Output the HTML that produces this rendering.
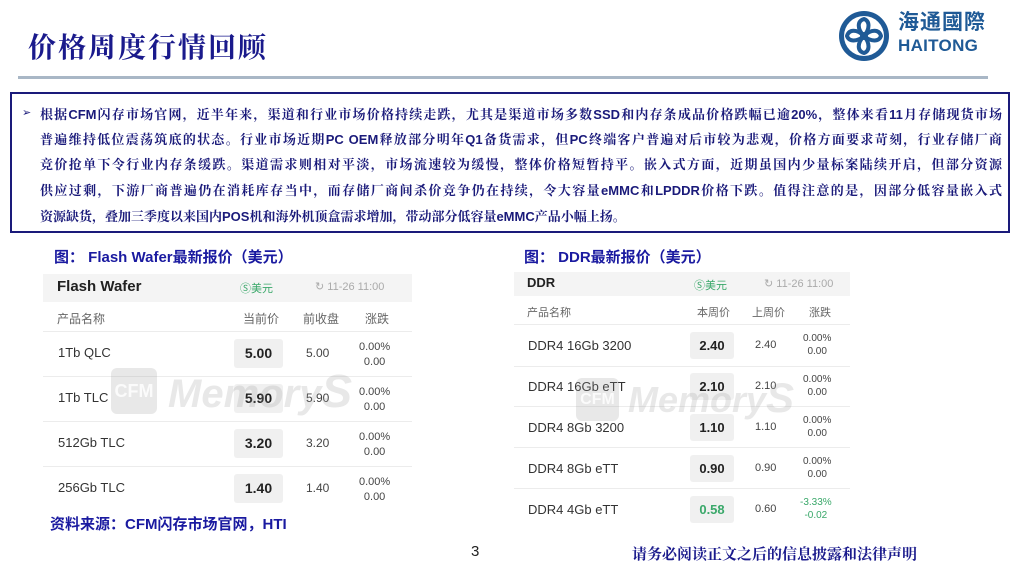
<!DOCTYPE html>
<html><head><meta charset="utf-8"><style>
*{margin:0;padding:0;box-sizing:border-box}
body{width:1024px;height:576px;background:#fff;position:relative;overflow:hidden;font-family:"Liberation Sans","Noto Sans CJK SC",sans-serif}
.abs{position:absolute;white-space:nowrap}
.title{left:28px;top:26px;font-size:28px;color:#1a1a8c;font-family:"Liberation Serif","Noto Serif CJK SC",serif;font-weight:bold;letter-spacing:2px}
.hr{left:18px;top:76px;width:970px;height:3px;background:#a9b7c6}
.box{left:10px;top:92px;width:1000px;height:141px;border:2px solid #1a1a7a}
.ln{position:absolute;left:40px;width:962px;font-size:13px;color:#1a1a7a;font-weight:bold;text-align:justify;text-align-last:justify;white-space:nowrap;font-family:"Liberation Sans","Noto Serif CJK SC",serif}
.cap{font-size:15px;font-weight:bold;color:#1a1aa0}
.hdr{background:#f4f4f4}
.g{color:#666;font-size:12px}
.pb{background:#f0f0f0;border-radius:3px;font-weight:bold;text-align:center;color:#222}
.sep{height:1px;background:#ececec}
.wm{font-size:40px;font-weight:bold;font-style:italic;color:rgba(150,150,150,0.22)}
.cfm{background:rgba(150,150,150,0.22);color:rgba(255,255,255,0.8);border-radius:6px;font-weight:bold;text-align:center}
</style></head><body>
<div class="abs title">价格周度行情回顾</div>
<svg class="abs" style="left:837px;top:9px" width="54" height="54" viewBox="0 0 54 54">
<circle cx="27" cy="27" r="25" fill="#1f5a96"/>
<circle cx="27" cy="27" r="20" fill="#fff"/>
<g fill="none" stroke="#1f5a96" stroke-width="4" stroke-linecap="round">
<path d="M27 27 C20 20 20 12 27 10 C33 12 33 20 27 27"/>
<path d="M27 27 C20 34 20 42 27 44 C33 42 33 34 27 27"/>
<path d="M27 27 C20 20 12 20 10 27 C12 33 20 33 27 27"/>
<path d="M27 27 C34 20 42 20 44 27 C42 33 34 33 27 27"/>
</g>
<circle cx="27" cy="27" r="4" fill="#1f5a96"/>
</svg>
<div class="abs" style="left:898px;top:11px;font-size:21px;line-height:24px;color:#1f5a96;font-weight:bold;letter-spacing:1px">海通國際</div>
<div class="abs" style="left:898px;top:36px;font-size:17px;line-height:20px;color:#1f5a96;font-weight:bold;letter-spacing:0.3px">HAITONG</div>
<div class="abs hr"></div>
<div class="abs box"></div>
<div class="abs" style="left:22px;top:106px;font-size:11px;color:#1a1a7a">➢</div>
<div class="ln" style="top:104px">根据CFM闪存市场官网，近半年来，渠道和行业市场价格持续走跌，尤其是渠道市场多数SSD和内存条成品价格跌幅已逾20%，整体来看11月存储现货市场</div>
<div class="ln" style="top:129px">普遍维持低位震荡筑底的状态。行业市场近期PC OEM释放部分明年Q1备货需求，但PC终端客户普遍对后市较为悲观，价格方面要求苛刻，行业存储厂商</div>
<div class="ln" style="top:154px">竞价抢单下令行业内存条缓跌。渠道需求则相对平淡，市场流速较为缓慢，整体价格短暂持平。嵌入式方面，近期虽国内少量标案陆续开启，但部分资源</div>
<div class="ln" style="top:180px">供应过剩，下游厂商普遍仍在消耗库存当中，而存储厂商间杀价竞争仍在持续，令大容量eMMC和LPDDR价格下跌。值得注意的是，因部分低容量嵌入式</div>
<div class="ln" style="top:206px;width:auto;text-align-last:left">资源缺货，叠加三季度以来国内POS机和海外机顶盒需求增加，带动部分低容量eMMC产品小幅上扬。</div>

<div class="abs cap" style="left:54px;top:246px">图： Flash Wafer最新报价（美元）</div>
<div class="abs hdr" style="left:43px;top:274px;width:369px;height:28px"></div>
<div class="abs" style="left:57px;top:278px;font-size:15px;font-weight:bold;color:#222">Flash Wafer</div>
<div class="abs" style="left:240px;top:280px;font-size:11px;color:#3aa86a">Ⓢ美元</div>
<div class="abs" style="left:315px;top:280px;font-size:11px;color:#aaa">↻ 11-26 11:00</div>
<div class="abs g" style="left:57px;top:310px">产品名称</div>
<div class="abs g" style="left:243px;top:310px">当前价</div>
<div class="abs g" style="left:303px;top:310px">前收盘</div>
<div class="abs g" style="left:365px;top:310px">涨跌</div>
<div class="abs sep" style="left:43px;top:331px;width:369px"></div>
<div class="abs sep" style="left:43px;top:376px;width:369px"></div>
<div class="abs sep" style="left:43px;top:421px;width:369px"></div>
<div class="abs sep" style="left:43px;top:466px;width:369px"></div>
<div class="abs" style="left:58px;top:345px;font-size:13px;color:#333">1Tb QLC</div>
<div class="abs pb" style="left:234px;top:339px;width:49px;height:29px;line-height:29px;font-size:14px">5.00</div>
<div class="abs" style="left:306px;top:346px;font-size:12px;color:#444">5.00</div>
<div class="abs" style="left:359px;top:340px;font-size:11px;color:#444;text-align:center;line-height:15px">0.00%<br>0.00</div>
<div class="abs" style="left:58px;top:390px;font-size:13px;color:#333">1Tb TLC</div>
<div class="abs pb" style="left:234px;top:384px;width:49px;height:29px;line-height:29px;font-size:14px">5.90</div>
<div class="abs" style="left:306px;top:391px;font-size:12px;color:#444">5.90</div>
<div class="abs" style="left:359px;top:385px;font-size:11px;color:#444;text-align:center;line-height:15px">0.00%<br>0.00</div>
<div class="abs" style="left:58px;top:435px;font-size:13px;color:#333">512Gb TLC</div>
<div class="abs pb" style="left:234px;top:429px;width:49px;height:29px;line-height:29px;font-size:14px">3.20</div>
<div class="abs" style="left:306px;top:436px;font-size:12px;color:#444">3.20</div>
<div class="abs" style="left:359px;top:430px;font-size:11px;color:#444;text-align:center;line-height:15px">0.00%<br>0.00</div>
<div class="abs" style="left:58px;top:480px;font-size:13px;color:#333">256Gb TLC</div>
<div class="abs pb" style="left:234px;top:474px;width:49px;height:29px;line-height:29px;font-size:14px">1.40</div>
<div class="abs" style="left:306px;top:481px;font-size:12px;color:#444">1.40</div>
<div class="abs" style="left:359px;top:475px;font-size:11px;color:#444;text-align:center;line-height:15px">0.00%<br>0.00</div>
<div class="abs cfm" style="left:111px;top:368px;width:46px;height:46px;line-height:46px;font-size:18px">CFM</div>
<div class="abs wm" style="left:168px;top:364px">Memory<span style="font-size:46px">S</span></div>

<div class="abs cap" style="left:50px;top:513px;color:#1a1aa0">资料来源：CFM闪存市场官网，HTI</div>

<div class="abs cap" style="left:524px;top:246px">图： DDR最新报价（美元）</div>
<div class="abs hdr" style="left:514px;top:272px;width:336px;height:24px"></div>
<div class="abs" style="left:527px;top:275px;font-size:13px;font-weight:bold;color:#222">DDR</div>
<div class="abs" style="left:694px;top:277px;font-size:11px;color:#3aa86a">Ⓢ美元</div>
<div class="abs" style="left:764px;top:277px;font-size:11px;color:#aaa">↻ 11-26 11:00</div>
<div class="abs g" style="left:527px;top:304px;font-size:11px">产品名称</div>
<div class="abs g" style="left:697px;top:304px;font-size:11px">本周价</div>
<div class="abs g" style="left:752px;top:304px;font-size:11px">上周价</div>
<div class="abs g" style="left:809px;top:304px;font-size:11px">涨跌</div>
<div class="abs sep" style="left:514px;top:324px;width:336px"></div>
<div class="abs sep" style="left:514px;top:366px;width:336px"></div>
<div class="abs sep" style="left:514px;top:406px;width:336px"></div>
<div class="abs sep" style="left:514px;top:447px;width:336px"></div>
<div class="abs sep" style="left:514px;top:488px;width:336px"></div>
<div class="abs" style="left:528px;top:338px;font-size:13px;color:#333">DDR4 16Gb 3200</div>
<div class="abs pb" style="left:690px;top:332px;width:44px;height:27px;line-height:27px;font-size:13px">2.40</div>
<div class="abs" style="left:755px;top:339px;font-size:11px;color:#444">2.40</div>
<div class="abs" style="left:803px;top:332px;font-size:10px;color:#444;text-align:center;line-height:13px">0.00%<br>0.00</div>
<div class="abs" style="left:528px;top:379px;font-size:13px;color:#333">DDR4 16Gb eTT</div>
<div class="abs pb" style="left:690px;top:373px;width:44px;height:27px;line-height:27px;font-size:13px">2.10</div>
<div class="abs" style="left:755px;top:380px;font-size:11px;color:#444">2.10</div>
<div class="abs" style="left:803px;top:373px;font-size:10px;color:#444;text-align:center;line-height:13px">0.00%<br>0.00</div>
<div class="abs" style="left:528px;top:420px;font-size:13px;color:#333">DDR4 8Gb 3200</div>
<div class="abs pb" style="left:690px;top:414px;width:44px;height:27px;line-height:27px;font-size:13px">1.10</div>
<div class="abs" style="left:755px;top:421px;font-size:11px;color:#444">1.10</div>
<div class="abs" style="left:803px;top:414px;font-size:10px;color:#444;text-align:center;line-height:13px">0.00%<br>0.00</div>
<div class="abs" style="left:528px;top:461px;font-size:13px;color:#333">DDR4 8Gb eTT</div>
<div class="abs pb" style="left:690px;top:455px;width:44px;height:27px;line-height:27px;font-size:13px">0.90</div>
<div class="abs" style="left:755px;top:462px;font-size:11px;color:#444">0.90</div>
<div class="abs" style="left:803px;top:455px;font-size:10px;color:#444;text-align:center;line-height:13px">0.00%<br>0.00</div>
<div class="abs" style="left:528px;top:502px;font-size:13px;color:#333">DDR4 4Gb eTT</div>
<div class="abs pb" style="left:690px;top:496px;width:44px;height:27px;line-height:27px;font-size:13px;color:#3aa86a">0.58</div>
<div class="abs" style="left:755px;top:503px;font-size:11px;color:#444">0.60</div>
<div class="abs" style="left:800px;top:496px;font-size:10px;color:#3aa86a;text-align:center;line-height:13px">-3.33%<br>-0.02</div>
<div class="abs cfm" style="left:576px;top:378px;width:43px;height:43px;line-height:43px;font-size:16px">CFM</div>
<div class="abs wm" style="left:628px;top:374px;font-size:36px">Memory<span style="font-size:42px">S</span></div>

<div class="abs" style="left:471px;top:543px;font-size:15px;color:#222">3</div>
<div class="abs cap" style="left:632px;top:543px;color:#1a1a8c;font-family:'Liberation Serif','Noto Serif CJK SC',serif">请务必阅读正文之后的信息披露和法律声明</div>
</body></html>
